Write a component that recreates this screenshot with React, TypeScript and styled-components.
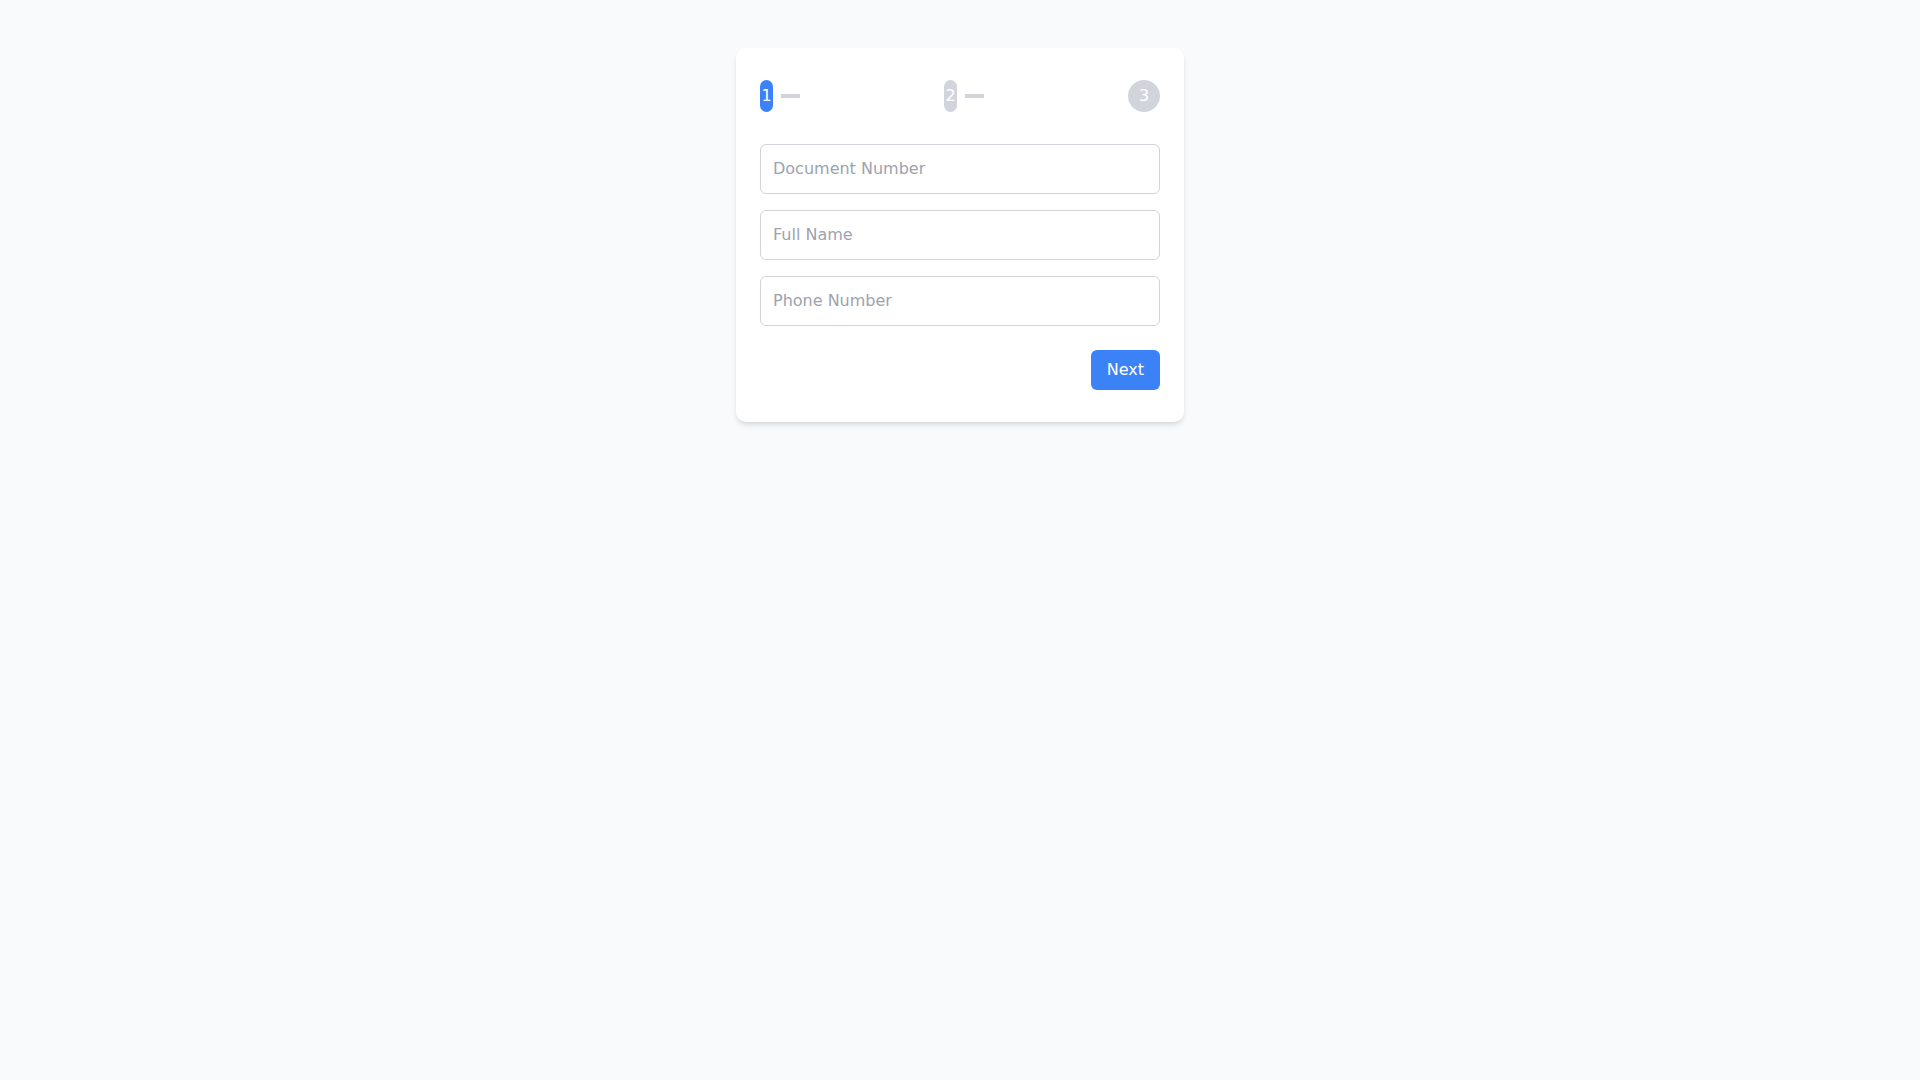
import styled, { createGlobalStyle } from 'styled-components'

const GlobalStyle = createGlobalStyle`
  * {
    box-sizing: border-box;
  }
  body {
    margin: 0;
    background-color: #f9fafb;
    font-family: 'DejaVu Sans', 'Liberation Sans', sans-serif;
    line-height: 1.5;
    color: #111827;
  }
`

const steps = [1, 2, 3]

const App = () => {
  return (
    <>
      <GlobalStyle />
      <Page>
        <Card>
          <Stepper>
            {steps.map((step, i) => {
              const last = i === steps.length - 1
              return (
                <StepItem key={step}>
                  <Circle $active={step === 1} $squeezed={!last}>
                    {step}
                  </Circle>
                  {!last && <Connector />}
                </StepItem>
              )
            })}
          </Stepper>
          <Form>
            <Input placeholder="Document Number" />
            <Input placeholder="Full Name" />
            <Input placeholder="Phone Number" />
            <Actions>
              <NextButton type="button">Next</NextButton>
            </Actions>
          </Form>
        </Card>
      </Page>
    </>
  )
}

export default App

const Page = styled.div`
  min-height: 100vh;
  display: flex;
  justify-content: center;
  align-items: flex-start;
  padding-top: 48px;
`

const Card = styled.div`
  width: 448px;
  padding: 32px 24px;
  background-color: #ffffff;
  border-radius: 10px;
  box-shadow: 0 4px 6px -1px rgba(0, 0, 0, 0.1), 0 2px 4px -2px rgba(0, 0, 0, 0.1);
`

const Stepper = styled.div`
  display: flex;
  justify-content: space-between;
  align-items: center;
  margin-bottom: 32px;
`

const StepItem = styled.div`
  display: flex;
  align-items: center;
`

const Circle = styled.div<{ $active: boolean; $squeezed: boolean }>`
  display: flex;
  justify-content: center;
  align-items: center;
  width: ${({ $squeezed }) => ($squeezed ? '13px' : '32px')};
  height: 32px;
  border-radius: 9999px;
  background-color: ${({ $active }) => ($active ? '#3b82f6' : '#d1d5db')};
  color: #ffffff;
  font-size: 16px;
  line-height: 24px;
  overflow: hidden;
`

const Connector = styled.div`
  width: 19px;
  height: 4px;
  margin-left: 8px;
  background-color: #d1d5db;
`

const Form = styled.div`
  display: flex;
  flex-direction: column;
  gap: 16px;
`

const Input = styled.input`
  display: block;
  width: 100%;
  padding: 12px;
  border: 1px solid #d1d5db;
  border-radius: 6px;
  font-family: inherit;
  font-size: 16px;
  line-height: 24px;
  color: #111827;
  background: #ffffff;
  outline: none;
  &::placeholder {
    color: #9ca3af;
  }
`

const Actions = styled.div`
  display: flex;
  justify-content: flex-end;
  margin-top: 8px;
`

const NextButton = styled.button`
  height: 40px;
  padding: 8px 16px;
  border: none;
  border-radius: 6px;
  background-color: #3b82f6;
  color: #ffffff;
  font-family: inherit;
  font-size: 16px;
  line-height: 24px;
  cursor: pointer;
  &:hover {
    background-color: #2563eb;
  }
`
